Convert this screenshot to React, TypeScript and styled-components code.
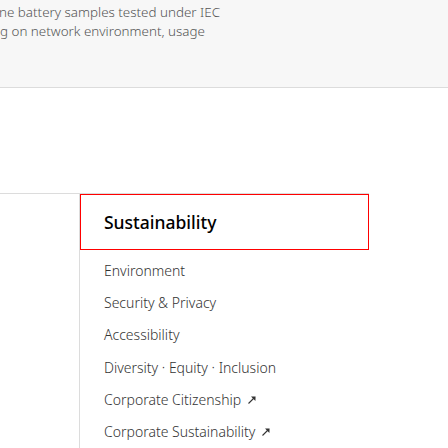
import React from "react";
import styled, { createGlobalStyle } from "styled-components";

const Global = createGlobalStyle`
  html, body { margin: 0; padding: 0; background: #fff; }
  body { font-family: "Noto Sans", Roboto, sans-serif; width: 448px; height: 448px; overflow: hidden; }
  * { box-sizing: border-box; }
`;

const Page = styled.div`
  width: 448px;
  height: 448px;
  overflow: hidden;
  display: flex;
  flex-direction: column;
`;

const Disclaimer = styled.div`
  height: 89px;
  background: #f7f7f7;
  border-bottom: 1px solid #dcdcdc;
  padding-top: 3px;
  overflow: hidden;
`;

const DisclaimerLine = styled.p<{ $shift: number }>`
  margin: 0 0 0 ${(p) => p.$shift}px;
  font-size: 13.4px;
  font-weight: 300;
  line-height: 19px;
  color: #555;
  white-space: nowrap;
`;

const Gap = styled.div`
  height: 106px;
`;

const FooterRow = styled.div`
  width: 369px;
  border-top: 1px solid #dcdcdc;
  display: flex;
  flex: 1;
`;

const Column = styled.div`
  margin-left: 79px;
  flex: 1;
  border-left: 1px solid #dcdcdc;
  display: flex;
  flex-direction: column;
`;

const ColumnTitle = styled.button`
  display: block;
  width: 100%;
  height: 56px;
  margin: 0;
  padding: 0 0 0 23px;
  background: #fff;
  border: 1.5px solid #ff0000;
  text-align: left;
  font-family: "Noto Sans", Roboto, sans-serif;
  font-size: 17.5px;
  font-weight: 500;
  color: #000;
  cursor: pointer;
`;

const LinkList = styled.ul`
  list-style: none;
  margin: 0;
  padding: 5px 0 0 24px;
`;

const LinkItem = styled.li`
  font-size: 14px;
  font-weight: 300;
  line-height: 20px;
  padding: 6.1px 0;
  color: #333;
  display: flex;
  align-items: center;
  gap: 6px;
`;

const Arrow = () => (
  <svg width="10" height="10" viewBox="0 0 10 10" aria-hidden="true">
    <path d="M1.5 8.5 L7.5 2.5" stroke="#333" strokeWidth="1.1" fill="none" />
    <path d="M4 1.6 L8.6 1.4 L8.4 6 Z" fill="#333" />
  </svg>
);

const links: { label: string; external?: boolean }[] = [
  { label: "Environment" },
  { label: "Security & Privacy" },
  { label: "Accessibility" },
  { label: "Diversity · Equity · Inclusion" },
  { label: "Corporate Citizenship", external: true },
  { label: "Corporate Sustainability", external: true },
];

export default function App() {
  return (
    <Page>
      <Global />
      <Disclaimer>
        <DisclaimerLine $shift={-1}>ne battery samples tested under IEC</DisclaimerLine>
        <DisclaimerLine $shift={0}>g on network environment, usage</DisclaimerLine>
      </Disclaimer>
      <Gap />
      <FooterRow>
        <Column>
          <ColumnTitle>Sustainability</ColumnTitle>
          <LinkList>
            {links.map((l) => (
              <LinkItem key={l.label}>
                {l.label}
                {l.external && <Arrow />}
              </LinkItem>
            ))}
          </LinkList>
        </Column>
      </FooterRow>
    </Page>
  );
}
